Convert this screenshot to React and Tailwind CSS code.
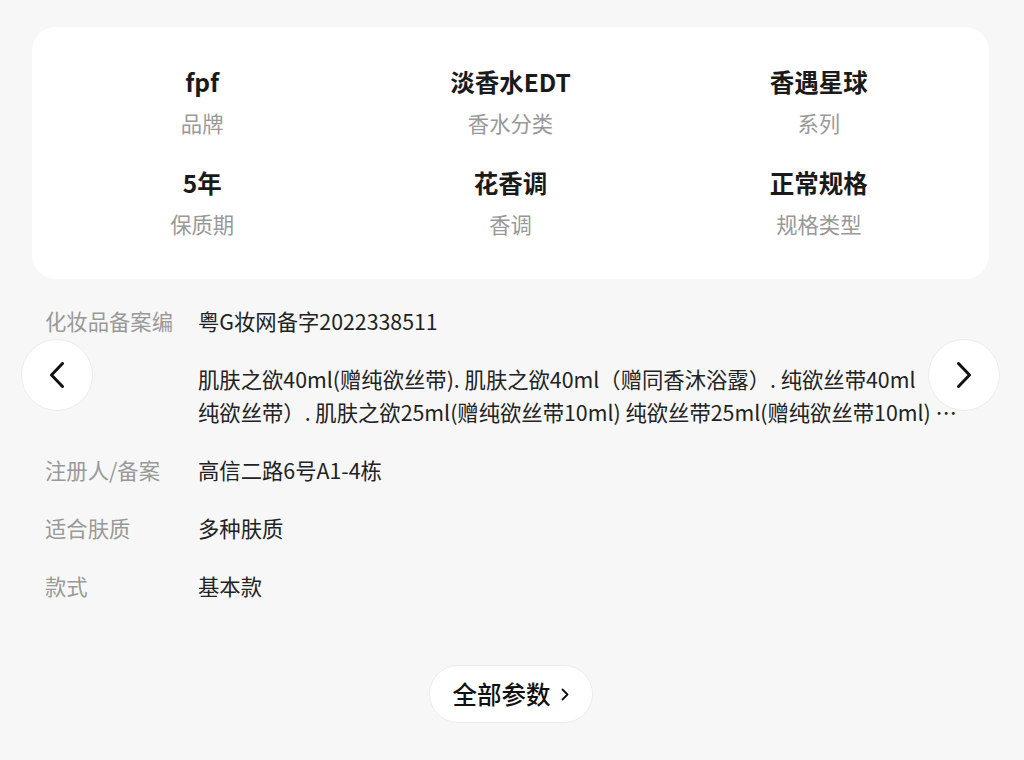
import React from "react";

const font = { fontFamily: '"Noto Sans CJK SC", "Noto Sans", sans-serif' };

const specs = [
  { value: "fpf", label: "品牌" },
  { value: "淡香水EDT", label: "香水分类" },
  { value: "香遇星球", label: "系列" },
  { value: "5年", label: "保质期" },
  { value: "花香调", label: "香调" },
  { value: "正常规格", label: "规格类型" },
];

// the long spec value is shown as two lines, the second cut with an ellipsis
const rows = [
  { label: "化妆品备案编", value: ["粤G妆网备字2022338511"] },
  {
    label: "",
    value: [
      "肌肤之欲40ml(赠纯欲丝带). 肌肤之欲40ml（赠同香沐浴露）. 纯欲丝带40ml",
      "纯欲丝带）. 肌肤之欲25ml(赠纯欲丝带10ml) 纯欲丝带25ml(赠纯欲丝带10ml) …",
    ],
  },
  { label: "注册人/备案", value: ["高信二路6号A1-4栋"] },
  { label: "适合肤质", value: ["多种肤质"] },
  { label: "款式", value: ["基本款"] },
];

function NavButton({ dir }) {
  return (
    <button
      className={
        "absolute top-[339px] w-[72px] h-[72px] rounded-full bg-white border border-[#ececec] flex items-center justify-center " +
        (dir === "left" ? "left-[21px]" : "left-[928px]")
      }
    >
      <svg width="16" height="26" viewBox="0 0 16 26" fill="none">
        {dir === "left" ? (
          <path d="M13.5 1.5 2.5 13l11 11.5" stroke="#111" strokeWidth="3" strokeLinecap="round" strokeLinejoin="round" />
        ) : (
          <path d="M2.5 1.5 13.5 13 2.5 24.5" stroke="#111" strokeWidth="3" strokeLinecap="round" strokeLinejoin="round" />
        )}
      </svg>
    </button>
  );
}

export default function App() {
  return (
    <div lang="zh-CN" className="relative w-[1024px] h-[760px] bg-[#f7f7f7] overflow-hidden" style={font}>
      <div className="w-[957px] ml-[32px] pt-[27px]">
        <div className="bg-white rounded-3xl px-4 pt-[38px] pb-[40px] grid grid-cols-3 gap-y-[28px]">
          {specs.map((s, i) => (
            <div key={i} className="flex flex-col items-center">
              <div className="text-[24.5px] leading-[34px] font-bold text-[#1a1a1a]">{s.value}</div>
              <div className="mt-[9px] text-[21.33px] leading-[30px] text-[#999]">{s.label}</div>
            </div>
          ))}
        </div>

        <div className="mt-[25px] pl-[13px] pr-[20px] flex flex-col gap-[25px]">
          {rows.map((r, i) => (
            <div key={i} className="flex text-[21.33px] leading-[33px]">
              <div className="w-[153px] shrink-0 text-[#999] whitespace-nowrap overflow-hidden">{r.label}</div>
              <div className="flex-1 min-w-0 text-[#222]">
                {r.value.map((line, j) => (
                  <div key={j} className="whitespace-nowrap overflow-hidden">{line}</div>
                ))}
              </div>
            </div>
          ))}
        </div>

        <div className="flex justify-center mt-[63px]">
          <button className="h-[58px] w-[164px] rounded-full bg-white border border-[#ececec] flex items-center justify-center gap-[10px]">
            <span className="text-[24.5px] leading-none font-medium text-[#111]">全部参数</span>
            <svg width="8" height="13" viewBox="0 0 8 13" fill="none">
              <path d="M1.5 1.5 6.5 6.5l-5 5" stroke="#111" strokeWidth="1.8" strokeLinecap="round" strokeLinejoin="round" />
            </svg>
          </button>
        </div>
      </div>

      <NavButton dir="left" />
      <NavButton dir="right" />
    </div>
  );
}
